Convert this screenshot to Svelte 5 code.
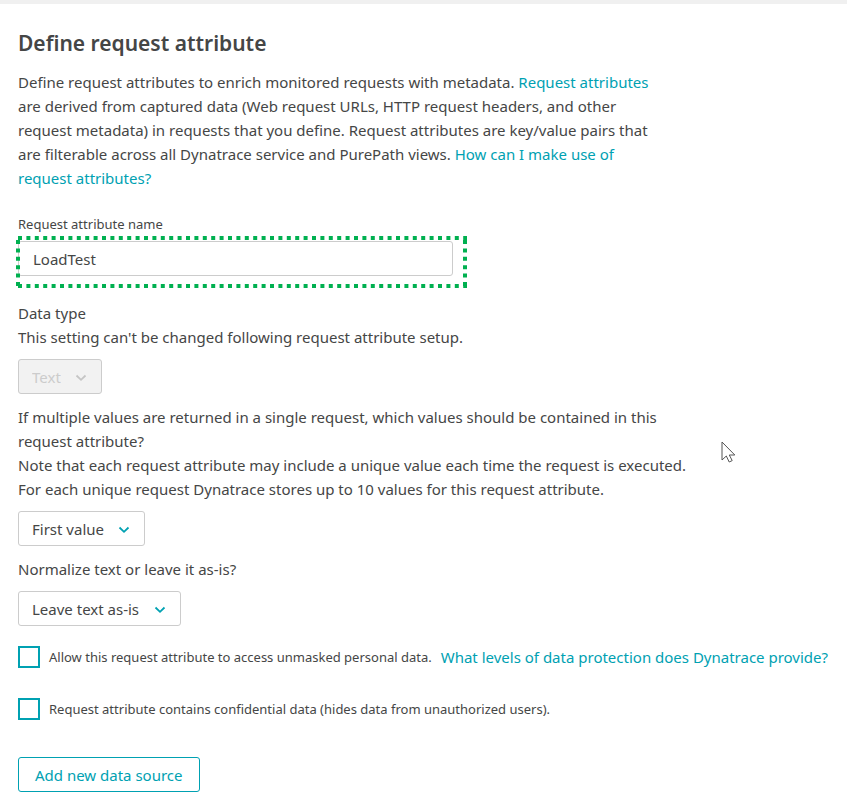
<script>
  let name = $state('LoadTest');
  let dataType = $state('Text');
  let captured = $state('First value');
  let normalization = $state('Leave text as-is');
  let unmasked = $state(false);
  let confidential = $state(false);
</script>

{#snippet chevron()}
  <svg class="chevron" viewBox="0 0 12 8" aria-hidden="true">
    <path d="M1.5 1.5 6 5.8l4.500-4.300" />
  </svg>
{/snippet}

<main>
  <h1>Define request attribute</h1>
  <p class="intro">
    Define request attributes to enrich monitored requests with metadata. <a href="#attributes">Request attributes</a><br />
    are derived from captured data (Web request URLs, HTTP request headers, and other<br />
    request metadata) in requests that you define. Request attributes are key/value pairs that<br />
    are filterable across all Dynatrace service and PurePath views. <a href="#usage">How can I make use of<br />
    request attributes?</a>
  </p>

  <label class="small name-label" for="name">Request attribute name</label>
  <div class="name-field">
    <input id="name" type="text" bind:value={name} />
    <svg class="highlight" aria-hidden="true">
      <line x1="2" y1="2" x2="100%" y2="2" />
      <line x1="2" y1="50" x2="100%" y2="50" />
      <line x1="2" y1="4" x2="2" y2="100%" />
      <svg x="100%" overflow="visible"><line x1="-2" y1="4" x2="-2" y2="52" /></svg>
    </svg>
  </div>

  <label class="question" for="type">Data type<br />This setting can't be changed following request attribute setup.</label>
  <div class="dropdown disabled">
    <select id="type" bind:value={dataType} disabled><option>Text</option></select>
    {@render chevron()}
  </div>

  <label class="question" for="captured">
    If multiple values are returned in a single request, which values should be contained in this<br />
    request attribute?<br />
    Note that each request attribute may include a unique value each time the request is executed.<br />
    For each unique request Dynatrace stores up to 10 values for this request attribute.
  </label>
  <div class="dropdown">
    <select id="captured" bind:value={captured}><option>First value</option></select>
    {@render chevron()}
  </div>

  <label class="question" for="normalize">Normalize text or leave it as-is?</label>
  <div class="dropdown">
    <select id="normalize" bind:value={normalization}><option>Leave text as-is</option></select>
    {@render chevron()}
  </div>

  <div class="check">
    <input id="unmasked" type="checkbox" bind:checked={unmasked} />
    <label class="small" for="unmasked">Allow this request attribute to access unmasked personal data.</label>
    <a href="#protection">What levels of data protection does Dynatrace provide?</a>
  </div>
  <div class="check">
    <input id="confidential" type="checkbox" bind:checked={confidential} />
    <label class="small" for="confidential">Request attribute contains confidential data (hides data from unauthorized users).</label>
  </div>

  <button type="button">Add new data source</button>

  <svg class="pointer" viewBox="0 0 15 22" aria-hidden="true">
    <path d="M1 1v18l4.300-4 2.900 6 3-1.400-2.900-5.600h5.500Z" />
  </svg>
</main>

<style>
  :global(body) {
    background: #fff;
  }

  main {
    position: relative;
    box-sizing: border-box;
    border-top: 4px solid #f0f0f0;
    padding: 23px 18px 4px;
    color: #454646;
    font: 15px/24px 'Noto Sans', sans-serif;
    white-space: nowrap;
  }

  h1 {
    margin: 0;
    font-size: 21px;
    font-weight: 600;
    line-height: 32px;
  }

  p {
    margin: 11px 0 0;
  }

  a {
    color: #00a1b2;
    text-decoration: none;
  }

  label {
    display: block;
  }

  .small {
    font-size: 13px;
  }

  .name-label {
    margin-top: 22px;
  }

  .name-field {
    position: relative;
    width: 435px;
    margin-top: 5px;
  }

  .name-field input {
    display: block;
    box-sizing: border-box;
    width: 100%;
    height: 35px;
    border: 1px solid #ccc;
    border-radius: 3px;
    padding: 0 14px;
    background: #fff;
    color: inherit;
    font: inherit;
  }

  .highlight {
    position: absolute;
    top: -5px;
    left: -2px;
    width: 451px;
    height: 52px;
    pointer-events: none;
  }

  .highlight line {
    stroke: #00b050;
    stroke-width: 4;
    stroke-dasharray: 4 4.400;
  }

  .question {
    margin-top: 11px;
  }

  .name-field + .question {
    margin-top: 25px;
  }

  .dropdown {
    position: relative;
    width: fit-content;
    margin-top: 10px;
    color: #00a1b2;
  }

  select {
    display: block;
    appearance: none;
    box-sizing: border-box;
    height: 35px;
    border: 1px solid #ccc;
    border-radius: 3px;
    padding: 0 40px 0 13px;
    background: #fff;
    color: #454646;
    font: inherit;
  }

  .disabled {
    color: #c5c5c5;
  }

  select:disabled {
    background: #f2f2f2;
    color: #ccc;
    opacity: 1;
  }

  .chevron {
    position: absolute;
    top: 15px;
    right: 15px;
    width: 12px;
    height: 8px;
    fill: none;
    stroke: currentColor;
    stroke-width: 1.800;
    pointer-events: none;
  }

  .check {
    display: flex;
    align-items: center;
    height: 24px;
    margin-top: 28px;
  }

  .dropdown + .check {
    margin-top: 19px;
  }

  .check input {
    appearance: none;
    box-sizing: border-box;
    flex: none;
    width: 22px;
    height: 22px;
    margin: 0 9px 0 0;
    border: 2px solid #00a1b2;
    background: #fff;
  }

  .check input:checked {
    background: #00a1b2;
    box-shadow: inset 0 0 0 3px #fff;
  }

  .check a {
    margin-left: 9px;
  }

  button {
    display: block;
    height: 35px;
    margin-top: 36px;
    border: 1px solid #00a1b2;
    border-radius: 3px;
    padding: 0 16px;
    background: #fff;
    color: #00a1b2;
    font: inherit;
  }

  .pointer {
    position: absolute;
    top: 437px;
    left: 721px;
    width: 15px;
    height: 22px;
    fill: #fff;
    stroke: #555;
    stroke-width: 1;
    pointer-events: none;
  }
</style>
